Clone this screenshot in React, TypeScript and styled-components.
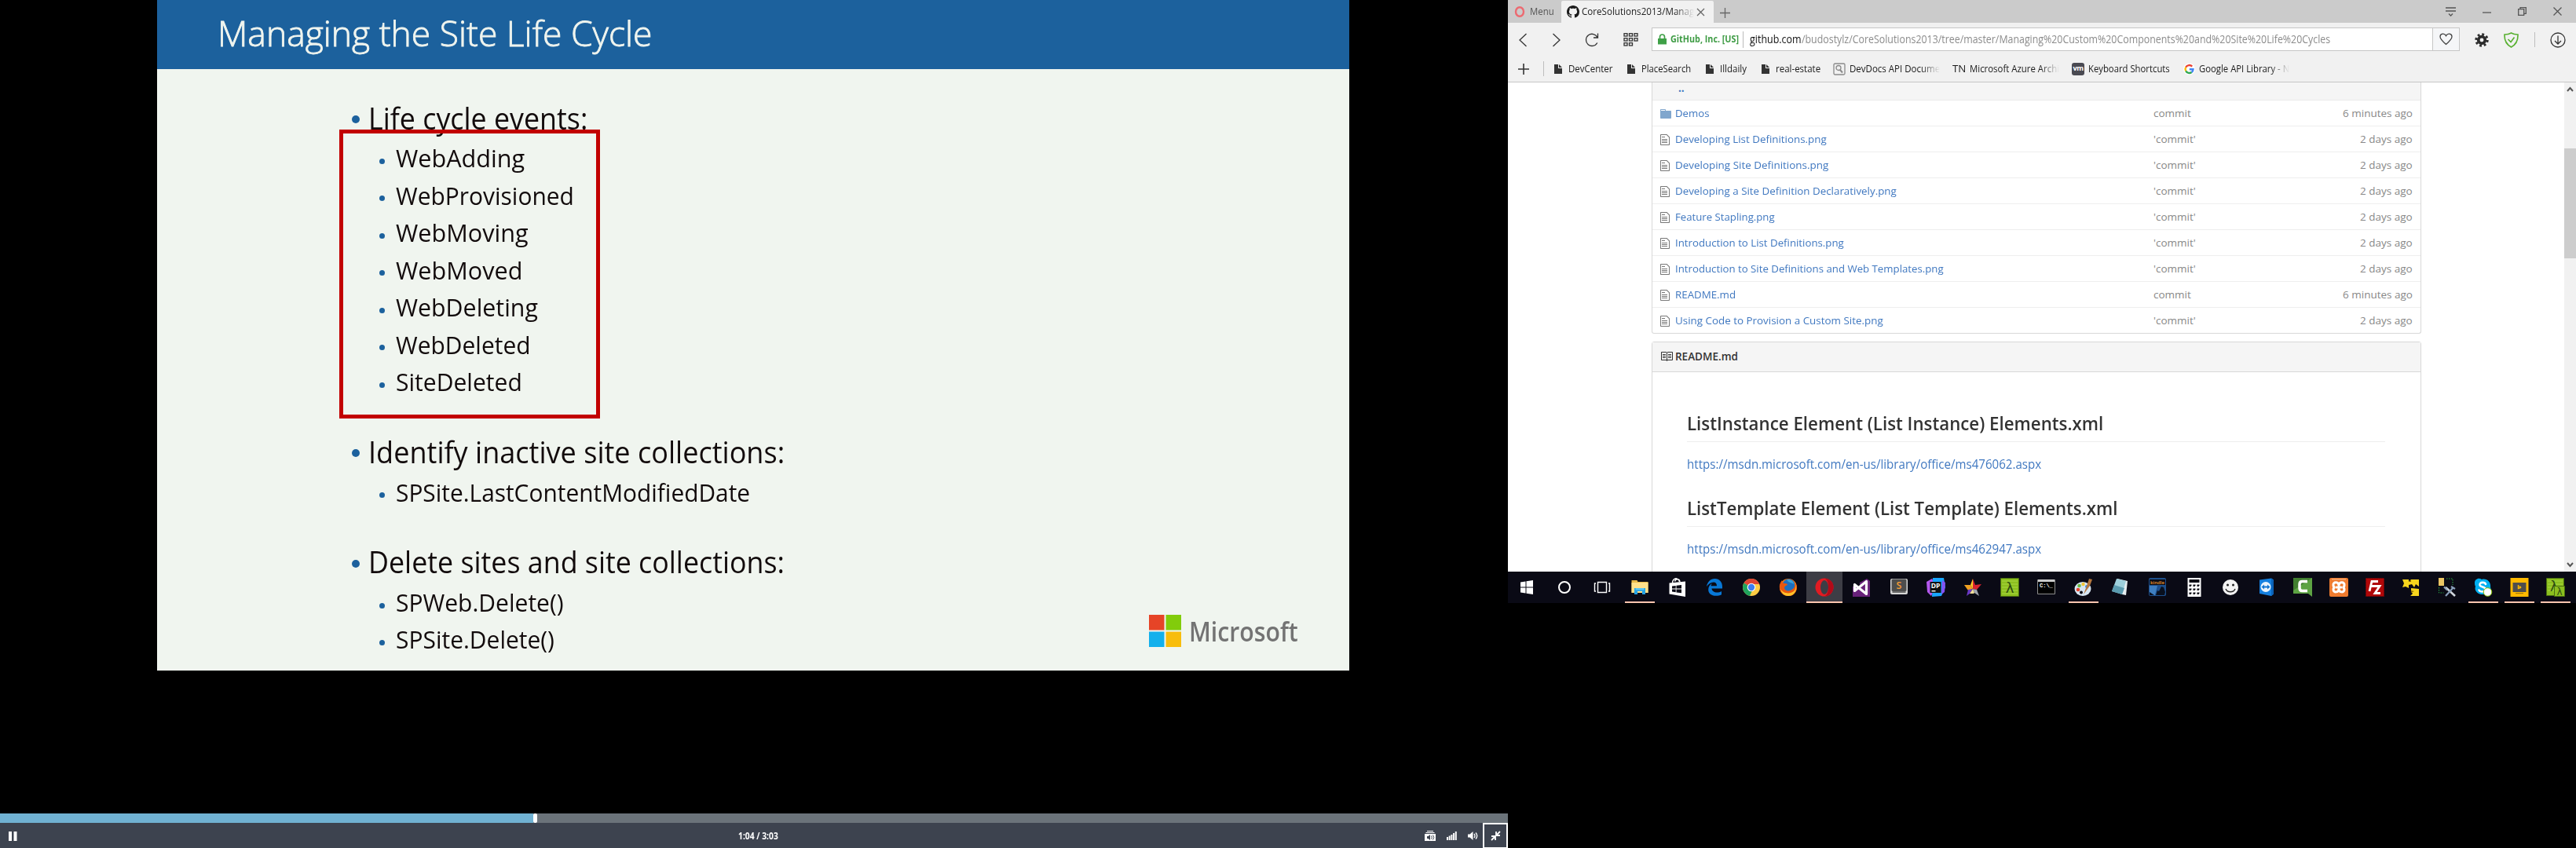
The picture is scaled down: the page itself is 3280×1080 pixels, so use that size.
import React, { useLayoutEffect, useRef, useState, ReactNode } from "react";
import styled, { createGlobalStyle } from "styled-components";

const Global = createGlobalStyle`
  * { box-sizing: border-box; }
  html, body { margin: 0; background: #000; }
  body { width: 3280px; height: 1080px; overflow: hidden; font-family: "Open Sans", "Noto Sans", sans-serif; }
  svg { display: block; flex: none; }
`;

/* ---------- text that is condensed to a set width ---------- */

const FitBox = styled.span<{ $w: number; $fade?: boolean }>`
  display: inline-block;
  flex: none;
  width: ${(p) => p.$w}px;
  white-space: pre;
  ${(p) => p.$fade && "mask-image: linear-gradient(to right, #000 calc(100% - 24px), transparent);"}
`;
const FitInner = styled.span`
  display: inline-block;
  transform-origin: left center;
`;

function Fit({ w, fade, children }: { w: number; fade?: boolean; children: ReactNode }) {
  const ref = useRef<HTMLSpanElement>(null);
  const [scale, setScale] = useState(1);
  useLayoutEffect(() => {
    if (ref.current) setScale(w / ref.current.offsetWidth);
  }, [w]);
  return (
    <FitBox $w={w} $fade={fade}>
      <FitInner ref={ref} style={{ transform: `scaleX(${scale})` }}>{children}</FitInner>
    </FitBox>
  );
}

/* ---------- screens ---------- */

const Desktop = styled.div`
  display: grid;
  grid-template-columns: 1920px 1360px;
  width: 3280px;
  height: 1080px;
  background: #000;
`;
const Player = styled.section`
  display: flex;
  flex-direction: column;
  height: 1080px;
`;
const Stage = styled.div`
  flex: 1;
  padding-left: 200px;
`;
const Slide = styled.article`
  width: 1518px;
  height: 854px;
  background: #f0f5ef;
  display: flex;
  flex-direction: column;
`;
const SlideHeader = styled.header`
  height: 88px;
  flex: none;
  padding-left: 76.5px;
  background: #1c619d;
  color: #f0f5ef;
  font-size: 45px;
  line-height: 84px;
  font-weight: 300;
  -webkit-text-stroke: 0.8px #f0f5ef;
`;
const SlideBody = styled.div`
  flex: 1;
  display: flex;
  justify-content: space-between;
  padding: 38.5px 65px 0 247px;
`;
const Outline = styled.div`
  display: flex;
  flex-direction: column;
  gap: 41.7px;
  color: #120b0c;
`;
const Topic = styled.div`
  position: relative;
`;
const TopicLine = styled.div<{ $sub?: boolean }>`
  display: flex;
  align-items: center;
  height: 47.5px;
  line-height: ${(p) => (p.$sub ? 49.5 : 47.5)}px;
  font-weight: 400;
  font-size: ${(p) => (p.$sub ? 31 : 37.5)}px;
  padding-left: ${(p) => (p.$sub ? 36 : 1)}px;
  padding-top: ${(p) => (p.$sub ? 1 : 0)}px;
  margin-bottom: ${(p) => (p.$sub ? 0 : 3.7)}px;
`;
const Bullet = styled.i<{ $sub?: boolean }>`
  flex: none;
  width: ${(p) => (p.$sub ? 7 : 10)}px;
  height: ${(p) => (p.$sub ? 7 : 10)}px;
  border-radius: 50%;
  background: #1c619d;
  margin-top: ${(p) => (p.$sub ? 7 : 3)}px;
  margin-right: ${(p) => (p.$sub ? 13.5 : 10.5)}px;
`;
const RedFrame = styled.div`
  position: absolute;
  left: -15px;
  top: 38px;
  width: 332px;
  height: 368px;
  border: 5px solid #c20000;
`;
const Brand = styled.div`
  align-self: flex-start;
  display: flex;
  align-items: center;
  gap: 10px;
  height: 41px;
  margin-top: 656.5px;
  color: #737373;
  font-size: 35px;
  font-weight: 600;
  line-height: 41px;
`;
const Track = styled.div`
  display: flex;
  height: 12px;
  background: #6b737a;
`;
const Played = styled.div`
  width: 679px;
  background: #70b1d2;
`;
const Knob = styled.div`
  width: 5px;
  border-radius: 2px;
  background: #fff;
`;
const Controls = styled.div`
  display: grid;
  grid-template-columns: 940px 1fr auto;
  align-items: center;
  height: 32px;
  padding-bottom: 1px;
  background: #3d434f;
  color: #fff;
  font-size: 11.5px;
  font-weight: 700;
`;
const PauseSlot = styled.div`
  padding-left: 11px;
`;
const ControlIcons = styled.div`
  display: flex;
  align-items: center;
  gap: 14px;
`;
const ShrinkButton = styled.div`
  display: flex;
  align-items: center;
  justify-content: center;
  width: 32px;
  height: 33px;
  margin: 0 0 0 -9px;
  border: 2px solid #fff;
`;

/* ---------- browser ---------- */

const Browser = styled.section`
  display: flex;
  flex-direction: column;
  height: 768px;
  background: #fff;
`;
const TabStrip = styled.div`
  display: flex;
  height: 29px;
  flex: none;
  padding-top: 1px;
  background: #cbcbcb;
  font-size: 12.5px;
  line-height: 30px;
  color: #555;
`;
const MenuTab = styled.div`
  display: flex;
  align-items: center;
  gap: 6px;
  width: 68px;
  padding-left: 8px;
`;
const Tab = styled.div`
  display: flex;
  align-items: center;
  width: 194px;
  height: 28px;
  padding-left: 7px;
  gap: 3px;
  border-radius: 2px 2px 0 0;
  background: #f1f1f1;
  color: #222;
`;
const NewTab = styled.div`
  padding: 9px 0 0 8px;
  flex: 1;
`;
const WindowButtons = styled.div`
  display: flex;
  align-items: center;
  gap: 34px;
  height: 27px;
  padding-right: 18px;
`;
const Toolbar = styled.div`
  display: flex;
  align-items: center;
  height: 46px;
  flex: none;
  padding: 0 13px 4px 13px;
  background: #f1f1f1;
`;
const NavIcons = styled.div`
  display: flex;
  align-items: center;
  justify-content: space-between;
  width: 153px;
  margin-right: 17px;
  padding-top: 1px;
`;
const AddressBar = styled.div`
  display: flex;
  align-items: center;
  width: 1029px;
  height: 30px;
  padding-left: 7px;
  border: 1px solid #c6c6c6;
  background: #fff;
  font-size: 14px;
`;
const Lock = styled.div`
  margin-right: 5px;
`;
const Secure = styled.div`
  width: 93px;
  height: 21px;
  line-height: 20px;
  border-right: 1px solid #bbb;
  margin-right: 8px;
  color: #3f9c45;
  font-size: 12.5px;
  font-weight: 700;
`;
const UrlPath = styled.span`
  color: #8c8c8c;
`;
const Url = styled.div`
  flex: 1;
  color: #111;
  line-height: 22px;
`;
const HeartCell = styled.div`
  display: flex;
  align-items: center;
  justify-content: center;
  width: 34px;
  height: 28px;
  border-left: 1px solid #c6c6c6;
  background: #f5f6f8;
`;
const Extensions = styled.div`
  flex: 1;
  display: flex;
  align-items: center;
  justify-content: space-between;
  padding: 1px 0 0 19px;
`;
const Rule = styled.i`
  width: 1px;
  height: 19px;
  background: #bdbdbd;
`;
const Bookmarks = styled.div`
  display: flex;
  align-items: center;
  height: 30px;
  flex: none;
  padding: 0 0 4px 13px;
  background: #f1f1f1;
  border-bottom: 1px solid #c6c6c6;
  font-size: 12.5px;
  color: #1a1a1a;
  line-height: 20px;
`;
const AddMark = styled.div`
  display: flex;
  align-items: center;
  gap: 18px;
  width: 46px;
`;
const Mark = styled.div<{ $w: number; $gap?: number }>`
  display: flex;
  align-items: center;
  flex: none;
  width: ${(p) => p.$w}px;
  gap: ${(p) => p.$gap ?? 8}px;
`;
const VmBadge = styled.span`
  width: 16px;
  height: 16px;
  border-radius: 3px;
  background: #4a4a52;
  color: #fff;
  font-size: 9px;
  font-weight: 700;
  line-height: 14px;
  text-align: center;
  letter-spacing: -0.5px;
`;
const Viewport = styled.div`
  display: flex;
  height: 623px;
  flex: none;
  overflow: hidden;
`;
const Page = styled.main`
  width: 1345px;
  padding: 0 182px 0 183px;
  color: #888;
  font-size: 13.5px;
`;
const FileTable = styled.div`
  border: 1px solid #d8d8d8;
  border-top: 0;
  border-radius: 0 0 3px 3px;
  height: 320px;
  overflow: hidden;
`;
const ParentRow = styled.div`
  height: 23px;
  padding-left: 33px;
  background: #f5f5f5;
  border-bottom: 1px solid #ebebeb;
  color: #4078c0;
  font-weight: 700;
  line-height: 14px;
`;
const FileRow = styled.div`
  display: grid;
  grid-template-columns: 29px 599px 1fr auto;
  align-items: center;
  height: 33px;
  padding: 0 10px;
  line-height: 32px;
  border-bottom: 1px solid #eee;
`;
const FileLink = styled.a`
  color: #4078c0;
`;
const IconCell = styled.div`
  width: 19px;
  height: 18px;
  padding-top: 2px;
`;
const FileName = styled.div`
  margin-left: -10px;
`;
const Readme = styled.div`
  margin-top: 10px;
  height: 320px;
  border: 1px solid #d8d8d8;
  border-radius: 3px;
`;
const ReadmeHead = styled.div`
  display: flex;
  align-items: center;
  gap: 3px;
  height: 38px;
  padding: 0 0 1px 10px;
  background: #f5f5f5;
  border-bottom: 1px solid #d8d8d8;
  color: #333;
  font-weight: 600;
`;
const ReadmeBody = styled.div`
  padding: 44px 45px 0 44px;
`;
const Heading = styled.h2`
  margin: 0;
  height: 45px;
  line-height: 42px;
  border-bottom: 1px solid #eee;
  color: #333;
  font-size: 23px;
  font-weight: 600;
`;
const DocLink = styled.a`
  display: block;
  height: 24px;
  line-height: 24px;
  margin: 16px 0 23px;
  font-size: 16px;
  color: #4078c0;
`;
const ScrollBar = styled.div`
  display: flex;
  flex-direction: column;
  align-items: center;
  justify-content: space-between;
  width: 15px;
  padding: 5px 0;
  background: linear-gradient(#cdcdcd, #cdcdcd) 0 84px / 15px 140px no-repeat #f1f1f1;
`;
const TaskBar = styled.div`
  display: flex;
  height: 40px;
  flex: none;
  background: #0a0a15;
`;
const Task = styled.div<{ $w: number; $open?: boolean; $active?: boolean }>`
  display: flex;
  flex-direction: column;
  align-items: center;
  justify-content: space-between;
  width: ${(p) => p.$w}px;
  flex: none;
  padding-top: 8px;
  background: ${(p) => (p.$active ? "#3d3d45" : "transparent")};
  &::after {
    content: "";
    width: ${(p) => (p.$active ? p.$w : 38)}px;
    height: 2px;
    background: ${(p) => (p.$open ? "#ffc5ae" : "transparent")};
  }
`;

/* ---------- small icons ---------- */

const Ico = ({ w, h, children, vb, c = "#333", s = 1.3 }: any) => (
  <svg width={w} height={h} viewBox={vb ?? `0 0 ${w} ${h}`} fill="none" stroke={c} strokeWidth={s}>{children}</svg>
);
const GitHubMark = () => (
  <svg width="16" height="16" viewBox="0 0 16 16" fill="#1b1b1b">
    <path d="M8 0C3.580 0 0 3.580 0 8c0 3.540 2.290 6.530 5.470 7.590.4.070.550-.170.550-.380 0-.190-.010-.820-.010-1.490-2.010.370-2.530-.490-2.690-.940-.090-.230-.480-.940-.820-1.130-.280-.150-.680-.520-.010-.530.630-.010 1.080.580 1.230.820.720 1.210 1.870.870 2.330.660.070-.520.280-.870.510-1.070-1.780-.200-3.640-.890-3.640-3.950 0-.870.310-1.590.820-2.150-.080-.200-.360-1.020.080-2.120 0 0 .670-.210 2.200.820.640-.180 1.320-.270 2-.270s1.360.090 2 .270c1.530-1.040 2.200-.820 2.200-.820.440 1.100.160 1.920.080 2.120.510.560.820 1.270.820 2.150 0 3.070-1.870 3.750-3.650 3.950.290.250.540.730.540 1.480 0 1.070-.010 1.930-.010 2.200 0 .210.150.460.550.380A8.013 8.013 0 0 0 16 8c0-4.420-3.580-8-8-8z" />
  </svg>
);
const FileIcon = () => (
  <svg width="12" height="16" viewBox="0 0 12 16" fill="#777">
    <path d="M6 5H2V4h4v1zM2 8h7V7H2v1zm0 2h7V9H2v1zm0 2h7v-1H2v1zm10-7.5V14c0 .55-.45 1-1 1H1c-.55 0-1-.45-1-1V2c0-.55.45-1 1-1h7.5L12 4.5zM11 5L8 2H1v12h10V5z" />
  </svg>
);
const FolderIcon = () => (
  <svg width="14" height="16" viewBox="0 0 14 16" fill="#80a6cd">
    <path d="M13 4H7V3c0-.66-.31-1-1-1H1c-.55 0-1 .45-1 1v10c0 .55.45 1 1 1h12c.55 0 1-.45 1-1V5c0-.55-.45-1-1-1zM6 4H1V3h5v1z" />
  </svg>
);
const BookIcon = () => (
  <svg width="16" height="16" viewBox="0 0 16 16" fill="#333">
    <path d="M3 5h4v1H3V5zm0 3h4V7H3v1zm0 2h4V9H3v1zm11-5h-4v1h4V5zm0 2h-4v1h4V7zm0 2h-4v1h4V9zm2-6v9c0 .55-.45 1-1 1H9.5l-1 1-1-1H2c-.55 0-1-.45-1-1V3c0-.55.45-1 1-1h5.5l1 1 1-1H15c.55 0 1 .45 1 1zm-8 .5L7.5 3H2v9h6V3.5zm7-.5H9.5l-.5.5V12h6V3z" />
  </svg>
);
const PageIcon = () => (
  <svg width="10" height="12" viewBox="0 0 10 12" fill="#333"><path d="M0 0h5v5h5v7H0zM6 0l4 4H6z" /></svg>
);
const GoogleIcon = () => (
  <Ico w={15} h={16} s={2.4}>
    <circle cx="7.5" cy="8" r="7.5" fill="#fff" stroke="none" />
    <path d="M11.2 4.6A5 5 0 0 0 3.2 5.6" stroke="#ea4335" />
    <path d="M3.2 5.6A5 5 0 0 0 3.2 10.4" stroke="#fbbc05" />
    <path d="M3.2 10.4A5 5 0 0 0 10.6 12" stroke="#34a853" />
    <path d="M10.6 12A5 5 0 0 0 12.5 8.2H7.8" stroke="#4285f4" />
  </Ico>
);

/* ---------- taskbar icons, each on a 24 x 24 grid ---------- */

const T = ({ children }: { children: ReactNode }) => <svg width="24" height="24" viewBox="0 0 24 24">{children}</svg>;
const lambda = (x: number, y: number, size: number) => (
  <text x={x} y={y} fontSize={size} fontFamily="DejaVu Sans" textAnchor="middle" fill="#2c4a10">λ</text>
);

type TaskDef = { w: number; open?: boolean; active?: boolean; icon: ReactNode };
const tasks: TaskDef[] = [
  { w: 48, icon: <T><path fill="#fff" d="M4 5.500l6.500-1v7H4zM11.500 4.300L20 3v8.500h-8.500zM4 12.500h6.500v7L4 18.500zM11.500 12.500H20V21l-8.500-1.300z" /></T> },
  { w: 48, icon: <T><circle cx="12" cy="12" r="7" fill="none" stroke="#fff" strokeWidth="2" /></T> },
  { w: 48, icon: <T><path fill="none" stroke="#fff" strokeWidth="1.4" d="M6.500 5.500h11v13h-11zM4 7H2.500v10H4M20 7h1.500v10H20" /></T> },
  { w: 48, open: true, icon: <T><path fill="#e9b949" d="M1.500 3h7l1 2h13v14h-21z" /><path fill="#ffe08a" d="M1.500 6h21v13h-21z" /><path fill="#27a3e3" d="M5 13h14v8h-4v-4H9v4H5z" /><path fill="#5cc4f2" d="M6.500 13h11v2.500h-11z" /></T> },
  { w: 47, icon: <T><path fill="none" stroke="#fff" strokeWidth="1.4" d="M5.500 6.500C5.500 3 8 .8 10 .8S14 3 14.500 5M8.500 4.500c1-4 6-3.500 6.500 .5" /><path fill="#fff" d="M1.500 6.500L22 4.500V24L1.500 20.500z" /><path fill="#0a0a15" d="M5 10.500l4.700-.6v3.700H5zm5.500-.7l6.500-.8v4.600h-6.500zM5 14.500h4.700v3.700L5 17.600zm5.500 0H17v4.700l-6.500-.8z" /></T> },
  { w: 47, icon: <T><path fill="#0878d7" d="M2 11C3 5 7 1 12.500 1 18.500 1 22 5.500 22 11v2.500H8.500c.3 3.500 3.500 5 6.500 5 2.300 0 4.300-.6 6-1.600v4.400c-2 1-4.500 1.500-7.200 1.500C8 22.800 4.200 19.800 4.200 15c0-4 2.100-6.500 4.800-8-1 1.200-1.300 2.300-1.400 3.300H15C15 7 13.500 5.500 11 5.500 7 5.500 4 8 2 11z" /></T> },
  { w: 47, icon: <T><circle cx="12" cy="12" r="11" fill="#fc4" /><path fill="#de4334" d="M12 12L2.500 6.500A11 11 0 0 1 21.500 6.500L22 8H12z" /><path fill="#20a35d" d="M12 12L9.500 22.700A11 11 0 0 1 2.500 6.500z" /><path fill="#20a35d" d="M12 12l2 2-4 8.900-5-6z" /><circle cx="12" cy="12" r="5.300" fill="#fff" /><circle cx="12" cy="12" r="4.200" fill="#3d7df0" /></T> },
  { w: 47, icon: <T><circle cx="12" cy="12" r="11" fill="#f57c14" /><circle cx="12.500" cy="9.500" r="8" fill="#1c6fc0" /><path fill="#38a6dd" d="M10 3c4-2 9 1 9 5-2-2-5-1-9-5z" /><path fill="#e9570e" d="M1 9c1-3 2-5 3-6 0 3 1 4 4 4 2 0 3 1 3 2-3 1-4 2-4 4 1 4 7 5 12 0 2-3 2-5 2-7 4 7 1 17-9 17C4 23 0 17 1 9z" /><path fill="#ffc32a" d="M2 14c3 6 12 7 17 3 2-2 3-5 2-9 3 7-1 15-9 15-5 0-9-4-10-9z" /></T> },
  { w: 46, open: true, active: true, icon: <T><circle cx="12" cy="12" r="11.500" fill="#e21b22" /><path fill="#b30a18" d="M12 .5c9 1 12 7 11.500 12-.5 6-5 11-11.500 11 4-2 5-6 5-11.500S16 2 12 .5z" /><ellipse cx="12" cy="12" rx="5" ry="9" fill="#3d3d45" /></T> },
  { w: 48, icon: <T><path fill="#68217a" d="M1 11h22v13H1z" /><path fill="#68217a" d="M10 6l9-5 4 3v8H10z" /><path fill="none" stroke="#fff" strokeWidth="3.200" strokeLinejoin="round" d="M3.500 8.500v8L18.500 4.500v16z" /></T> },
  { w: 47, icon: <T><rect x="1" y="1" width="22" height="20" rx="2" fill="#d6d6d6" /><rect x="2.500" y="1.500" width="19" height="15.500" rx="1.500" fill="#4d4d4d" /><path fill="#6b6b6b" d="M3.500 17h17v2h-17z" /><text x="12" y="13.500" fontSize="12.500" fontWeight="600" fontFamily="Open Sans" textAnchor="middle" fill="#f59b35">S</text></T> },
  { w: 47, icon: <T><path fill="#b458ee" d="M0 5l7-4 5 9-6 13-5-5z" /><path fill="#18a6ff" d="M8 0h14l2 12-5 11-12 1z" /><path fill="#8551f2" d="M20 3l4 3-1 12-4 3z" /><path fill="#111" d="M4.500 5h14v14h-14z" /><text x="11.500" y="13" fontSize="8.500" fontWeight="700" fontFamily="Open Sans" textAnchor="middle" fill="#fff">DP</text><path fill="#fff" d="M6.500 16h5v1.400h-5z" /></T> },
  { w: 47, icon: <T><path fill="#ffcb2b" d="M12 1L9 9l3 5z" /><path fill="#f0a020" d="M1 9h8l3 5-6 2z" /><path fill="#d8232f" d="M12 1l3 8-3 5zM15 9l8-1-6 7-5-1z" /><path fill="#a1a5ad" d="M17 15l3 8-6-4-2-5z" /><path fill="#6a38c5" d="M6 15l6-1-4 6-4 3z" /><path fill="#f2df9a" d="M8 20l4-6 2 5-1 1z" /></T> },
  { w: 47, icon: <T><path fill="#8cbf1f" stroke="#4a6d11" d="M.5.500h23v23H.5z" /><path stroke="#a8d743" d="M2 4h20M2 8h20M2 12h20M2 16h20M2 20h20" />{lambda(12, 18.5, 18)}</T> },
  { w: 47, icon: <T><path fill="#000" stroke="#8e8e8e" d="M.5 2.500h22v18H.5z" /><path fill="#c9c9c9" d="M1 2h21v3H1z" /><text x="3" y="11.500" fontSize="7" fontWeight="700" fontFamily="Liberation Mono" fill="#fff">C:\_</text></T> },
  { w: 47, open: true, icon: <T><ellipse cx="11" cy="14" rx="10.500" ry="9" fill="#d7e6f3" /><circle cx="9" cy="18.500" r="2" fill="#0a0a15" /><circle cx="5" cy="15" r="2.300" fill="#e5442e" /><circle cx="6.500" cy="10" r="2.300" fill="#6bb840" /><circle cx="11.500" cy="8" r="2.200" fill="#f5c635" /><circle cx="16" cy="11" r="2" fill="#3c8be0" /><path fill="#b4763d" d="M19 1l4 1-3 8-8 11 4-11z" /></T> },
  { w: 47, icon: <T><path fill="#e6eef0" d="M8 1l13 3-2 18-5-1z" /><path fill="#9dd0dc" d="M7 1l12 3-5 17L1 17z" /><path fill="#5b9cb0" d="M4 9l13 4-3 8L1 17z" /></T> },
  { w: 47, icon: <T><rect x="1" y="0" width="22" height="23" rx="2" fill="#1d4f8c" /><path fill="#0a0d16" d="M2 2h20v7H2z" /><text x="12" y="7.800" fontSize="6" fontWeight="600" fontFamily="Open Sans" textAnchor="middle" fill="#f1982a">kindle</text><path fill="#3f7fc0" d="M2 10h10l-3 12H2z" /><path fill="#09101e" d="M10 22l2-6 2 1 3-6 3 1 2 6-1 4zM2 18l6 4H2z" /></T> },
  { w: 47, icon: <T><path fill="#fff" d="M3.500 0h17v24h-17z" /><path fill="#0a0a15" d="M5.500 2h13v4h-13z" />{[8.5, 13.5, 18.5].map((y) => [5.5, 10.5, 15.5].map((x) => <path key={`${x}-${y}`} fill="#0a0a15" d={`M${x} ${y}h3v1l-1 1.500H${x}z`} />))}</T> },
  { w: 46, icon: <T><circle cx="12" cy="12" r="10" fill="#f3f3f3" /><circle cx="8.500" cy="9" r="1.500" fill="#222" /><circle cx="15.500" cy="9" r="1.500" fill="#222" /><path fill="none" stroke="#222" strokeWidth="1.400" d="M6 14c2 5 10 5 12 0" /></T> },
  { w: 46, icon: <T><path fill="#1580df" d="M3 2.500L18 .5l3 2v18l-3 2.500-15-3z" /><path fill="#0b62b8" d="M18 .5l3 2v18L18 23z" /><circle cx="11" cy="11.500" r="6.500" fill="#e9f3fc" /><path fill="#1375d0" d="M5.500 11.500l3.500-3v2h4v-2l3.500 3-3.500 3v-2H9v2z" /></T> },
  { w: 46, icon: <T><path fill="#5da343" d="M0 0h24v24l-5-4H0z" /><path fill="#417e30" d="M0 0h24L0 16z" /><path fill="none" stroke="#fff" strokeWidth="3.500" d="M18 4.500h-6.500q-3.500 0-3.500 3.500v5q0 3.500 3.500 3.500H18" /></T> },
  { w: 46, icon: <T><rect x="0" y="0" width="24" height="24" rx="2" fill="#ef7b2e" /><path fill="#f7ad78" d="M3 1h18v1.500H3z" /><path fill="none" stroke="#fff" strokeWidth="3" strokeLinecap="round" d="M12 9.500c0-5-8-5-7 0 0 2 2 2.500 2 2.500s-2 .5-2 3c0 4 7 4 7-1m0-4.500c0-5 8-5 7 0 0 2-2 2.500-2 2.500s2 .5 2 3c0 4-7 4-7-1M9 12h6" /></T> },
  { w: 46, icon: <T><path fill="#b00708" stroke="#7b0406" strokeDasharray="1.500" d="M.5.500h23v23H.5z" /><path fill="none" stroke="#fff" strokeWidth="2.800" d="M5 17L8 4.500h8M6.500 10.500h6M11 10.500h7l-6 9h7" /></T> },
  { w: 46, icon: <T><path fill="#f7d51d" d="M1 2h8v3l3-3h10v9l-4-3-2 4-3-4-4 1v4L5 11 1 12l2-5zM12 13l10 1v9H11l3-3-2-3z" /><path fill="#8c6a00" d="M9 5l3-3v3zM12 16l4 1-4 2z" /></T> },
  { w: 46, icon: <T><path fill="#e9c463" d="M1 0h7v10H1z" /><path fill="none" stroke="#28a745" strokeDasharray="1.500" d="M11 1h8v8M1.500 12v7h6" /><path stroke="#d0d6dc" strokeWidth="2.600" d="M10 12l12 11" /><path stroke="#8aa0bb" strokeWidth="2.200" d="M20 12L10 23M8 11.500l4 4M17 11l5 3" /></T> },
  { w: 46, open: true, icon: <T><path fill="#00aff0" d="M1 6c0-4 5-7 9-4 7-2 12 4 11 10 3 6-3 11-8 9C5 22 0 16 2 11 1 9 1 8 1 6z" /><path fill="none" stroke="#fff" strokeWidth="2.600" strokeLinecap="round" d="M15 8C14 5 7 5 7.500 9c.5 3 7 2 7.500 5.500.2 3.500-7 4-8.500 1" /><circle cx="17.500" cy="18" r="5.300" fill="#fff" stroke="#7fba00" /></T> },
  { w: 46, open: true, icon: <T><path fill="#ffb900" d="M.5 0h23v24H.5z" /><path fill="#4d4d4d" d="M3.500 6h17v12h-17z" /><path fill="#a87c0a" d="M7 19h10v1.200H7z" /><path fill="none" stroke="#ffb900" strokeWidth="1.400" d="M10.500 9v4.500l3-1v-1l-2-.7" /></T> },
  { w: 46, open: true, icon: <T><path fill="#8cbf1f" stroke="#4a6d11" d="M.5.500h22v22H.5z" /><path stroke="#a8d743" d="M2 4h19M2 8h19M2 12h19M2 16h8" />{lambda(10, 17, 17)}<path fill="#8cbf1f" stroke="#4a6d11" d="M10.500 10.500h13v13h-13z" />{lambda(17, 21.5, 12)}</T> },
];

/* ---------- data ---------- */

const topics = [
  { title: "Life cycle events:", w: 279, framed: true, items: [["WebAdding", 164], ["WebProvisioned", 227], ["WebMoving", 169], ["WebMoved", 161], ["WebDeleting", 181], ["WebDeleted", 172], ["SiteDeleted", 161]] },
  { title: "Identify inactive site collections:", w: 530, items: [["SPSite.LastContentModifiedDate", 451]] },
  { title: "Delete sites and site collections:", w: 530, items: [["SPWeb.Delete()", 214], ["SPSite.Delete()", 202]] },
] as { title: string; w: number; framed?: boolean; items: [string, number][] }[];

const files: [string, number, boolean][] = [
  ["Demos", 43, true],
  ["Developing List Definitions.png", 193, false],
  ["Developing Site Definitions.png", 195, false],
  ["Developing a Site Definition Declaratively.png", 282, false],
  ["Feature Stapling.png", 127, false],
  ["Introduction to List Definitions.png", 215, false],
  ["Introduction to Site Definitions and Web Templates.png", 342, false],
  ["README.md", 77, true],
  ["Using Code to Provision a Custom Site.png", 265, false],
];

export default function App() {
  return (
    <>
      <Global />
      <Desktop>
        <Player>
          <Stage>
            <Slide>
              <SlideHeader><Fit w={554}>Managing the Site Life Cycle</Fit></SlideHeader>
              <SlideBody>
                <Outline>
                  {topics.map((t) => (
                    <Topic key={t.title}>
                      <TopicLine><Bullet /><Fit w={t.w}>{t.title}</Fit></TopicLine>
                      {t.items.map(([name, w]) => (
                        <TopicLine $sub key={name}><Bullet $sub /><Fit w={w}>{name}</Fit></TopicLine>
                      ))}
                      {t.framed && <RedFrame />}
                    </Topic>
                  ))}
                </Outline>
                <Brand>
                  <svg width="41" height="41" viewBox="0 0 41 41">
                    <path fill="#e64427" d="M0 0h19.500v19.500H0z" />
                    <path fill="#82cc0b" d="M21.500 0H41v19.500H21.500z" />
                    <path fill="#13b0ec" d="M0 21.500h19.500V41H0z" />
                    <path fill="#f8bd0c" d="M21.500 21.500H41V41H21.500z" />
                  </svg>
                  <Fit w={139}>Microsoft</Fit>
                </Brand>
              </SlideBody>
            </Slide>
          </Stage>
          <Track><Played /><Knob /></Track>
          <Controls>
            <PauseSlot><svg width="11" height="12"><path fill="#fff" d="M0 0h4v12H0zM6.500 0h4v12h-4z" /></svg></PauseSlot>
            <Fit w={51}>1:04 / 3:03</Fit>
            <ControlIcons>
              <svg width="14" height="13" viewBox="0 0 14 13"><path fill="#fff" d="M3 0h8v1H3zM1.500 2h11v1h-11zM0 4h14v9H0z" /><path fill="#3d434f" d="M3 7h1.500L7 5v7L4.500 10H3z" /><path fill="none" stroke="#3d434f" d="M8.500 6.500q1.500 2 0 4M10.500 5.500q2.500 3 0 6" /></svg>
              <svg width="13" height="11" viewBox="0 0 13 11"><path fill="#fff" d="M0 7h2v4H0zM2.700 5.500h2V11h-2zM5.400 4h2v7h-2zM8.100 2h2v9h-2zM10.800 0h2v11h-2z" /></svg>
              <svg width="14" height="11" viewBox="0 0 14 11"><path fill="#fff" d="M0 3.500h2.500L6.500 0v11L2.500 7.500H0z" /><path fill="none" stroke="#fff" strokeWidth="1.300" d="M8 3q2 2.500 0 5M10 1.500q3.500 4 0 8" /></svg>
              <ShrinkButton>
                <svg width="13" height="13" viewBox="0 0 13 13" fill="none" stroke="#fff" strokeWidth="1.800"><path d="M12 1L7.500 5.500M7 1v5h5M1 12l4.500-4.500M1 7h5v5" /></svg>
              </ShrinkButton>
            </ControlIcons>
          </Controls>
        </Player>

        <Browser>
          <TabStrip>
            <MenuTab>
              <svg width="14" height="14" viewBox="0 0 14 14"><ellipse cx="7" cy="7" rx="5" ry="5.800" fill="none" stroke="#ec6a71" strokeWidth="2.400" /></svg>
              <Fit w={31}>Menu</Fit>
            </MenuTab>
            <Tab>
              <GitHubMark />
              <Fit w={143} fade>CoreSolutions2013/Manag</Fit>
              <Ico w={11} h={11} c="#666"><path d="M1 1l9 9M10 1l-9 9" /></Ico>
            </Tab>
            <NewTab><Ico w={13} h={13} c="#666"><path d="M6.500 0v13M0 6.500h13" /></Ico></NewTab>
            <WindowButtons>
              <Ico w={13} h={12} c="#555"><path d="M0 1h13M0 5h13M4 8.500l2.500 2.500L9 8.500" /></Ico>
              <Ico w={11} h={12} c="#555"><path d="M0 7h11" /></Ico>
              <Ico w={11} h={11} c="#555"><path d="M.7 2.700h7v7.600h-7zM3 2.500V.7h7.300v7.600H8" /></Ico>
              <Ico w={11} h={11} c="#555"><path d="M.5.500l10 10M10.500.500l-10 10" /></Ico>
            </WindowButtons>
          </TabStrip>

          <Toolbar>
            <NavIcons>
              <Ico w={12} h={18}><path d="M10.500 1L2 9l8.500 8" /></Ico>
              <Ico w={12} h={18}><path d="M1.500 1L10 9l-8.500 8" /></Ico>
              <Ico w={18} h={18}><path d="M15.800 12.500A7.600 7.600 0 1 1 16 5.700M16.500.500v5.500h-5.500" /></Ico>
              <Ico w={19} h={17}>
                {[1, 7.5, 14].map((x) => [1, 7, 13].map((y) => (x === 14 && y === 13 ? null : <rect key={`${x}-${y}`} x={x} y={y - 0.3} width="4" height="3.300" />)))}
              </Ico>
            </NavIcons>
            <AddressBar>
              <Lock><svg width="11" height="14" viewBox="0 0 11 14"><path fill="#3fa047" d="M0 6h11v7.500H0z" /><path fill="none" stroke="#3fa047" strokeWidth="1.700" d="M2.500 6.500V4a3 3 0 0 1 6 0v2.500" /></svg></Lock>
              <Secure><Fit w={87}>GitHub, Inc. [US]</Fit></Secure>
              <Url>
                <Fit w={66}>github.com</Fit>
                <UrlPath><Fit w={673}>/budostylz/CoreSolutions2013/tree/master/Managing%20Custom%20Components%20and%20Site%20Life%20Cycles</Fit></UrlPath>
              </Url>
              <HeartCell><Ico w={17} h={16} c="#444"><path d="M8.500 14.500C4 10.500 1 7.700 1 4.700 1 .8 6.500-.3 8.500 3.600 10.500-.3 16 .8 16 4.700c0 3-3 5.800-7.500 9.800z" /></Ico></HeartCell>
            </AddressBar>
            <Extensions>
              <svg width="18" height="18" viewBox="0 0 18 18"><g fill="none" stroke="#2c2c2c"><circle cx="9" cy="9" r="4.300" strokeWidth="3.700" /><circle cx="9" cy="9" r="7.200" strokeWidth="3" strokeDasharray="2.800 2.855" /></g></svg>
              <Ico w={19} h={20} c="#58b030" s={1.6}><path d="M9.500 1C12 2.500 15 3 18 3c.3 7-2 12.500-8.500 16C3 15.500.7 10 1 3c3 0 6-.5 8.500-2zM5.500 9l3.500 3.500 4.500-6" /></Ico>
              <Rule />
              <Ico w={20} h={20}><circle cx="10" cy="10" r="9" /><path d="M10 4.500v10.500M6 11l4 4 4-4" /></Ico>
            </Extensions>
          </Toolbar>

          <Bookmarks>
            <AddMark><Ico w={14} h={14} s={1.6}><path d="M7 0v14M0 7h14" /></Ico><Rule /></AddMark>
            <Mark $w={93}><PageIcon /><Fit w={56}>DevCenter</Fit></Mark>
            <Mark $w={100}><PageIcon /><Fit w={63}>PlaceSearch</Fit></Mark>
            <Mark $w={71}><PageIcon /><Fit w={34}>Illdaily</Fit></Mark>
            <Mark $w={91}><PageIcon /><Fit w={57}>real-estate</Fit></Mark>
            <Mark $w={152} $gap={5}>
              <Ico w={16} h={16} c="#8a8a8a"><rect x="1" y="1" width="14" height="14" rx="1.500" /><circle cx="7" cy="6.500" r="3" /><path d="M9 9l3 3.500" strokeWidth="2" /></Ico>
              <Fit w={115} fade>DevDocs API Docume</Fit>
            </Mark>
            <Mark $w={152} $gap={5}><Fit w={17}>TN</Fit><Fit w={114} fade>Microsoft Azure Archi</Fit></Mark>
            <Mark $w={142} $gap={5}><VmBadge>vm</VmBadge><Fit w={104}>Keyboard Shortcuts</Fit></Mark>
            <Mark $w={140} $gap={5}><GoogleIcon /><Fit w={115} fade>Google API Library - N</Fit></Mark>
          </Bookmarks>

          <Viewport>
            <Page>
              <FileTable>
                <ParentRow>..</ParentRow>
                {files.map(([name, w, recent]) => (
                  <FileRow key={name}>
                    <IconCell>{name === "Demos" ? <FolderIcon /> : <FileIcon />}</IconCell>
                    <FileName><FileLink><Fit w={w}>{name}</Fit></FileLink></FileName>
                    <div><Fit w={recent ? 48 : 54}>{recent ? "commit" : "'commit'"}</Fit></div>
                    <Fit w={recent ? 89 : 67}>{recent ? "6 minutes ago" : "2 days ago"}</Fit>
                  </FileRow>
                ))}
              </FileTable>
              <Readme>
                <ReadmeHead><BookIcon /><Fit w={80}>README.md</Fit></ReadmeHead>
                <ReadmeBody>
                  <Heading><Fit w={530}>ListInstance Element (List Instance) Elements.xml</Fit></Heading>
                  <DocLink><Fit w={451}>https://msdn.microsoft.com/en-us/library/office/ms476062.aspx</Fit></DocLink>
                  <Heading><Fit w={548}>ListTemplate Element (List Template) Elements.xml</Fit></Heading>
                  <DocLink><Fit w={451}>https://msdn.microsoft.com/en-us/library/office/ms462947.aspx</Fit></DocLink>
                </ReadmeBody>
              </Readme>
            </Page>
            <ScrollBar>
              <Ico w={9} h={7} c="#555" s={2}><path d="M1 6l3.500-4L8 6" /></Ico>
              <Ico w={9} h={7} c="#555" s={2}><path d="M1 1l3.500 4L8 1" /></Ico>
            </ScrollBar>
          </Viewport>

          <TaskBar>
            {tasks.map((t, i) => (
              <Task key={i} $w={t.w} $open={t.open} $active={t.active}>{t.icon}</Task>
            ))}
          </TaskBar>
        </Browser>
      </Desktop>
    </>
  );
}
